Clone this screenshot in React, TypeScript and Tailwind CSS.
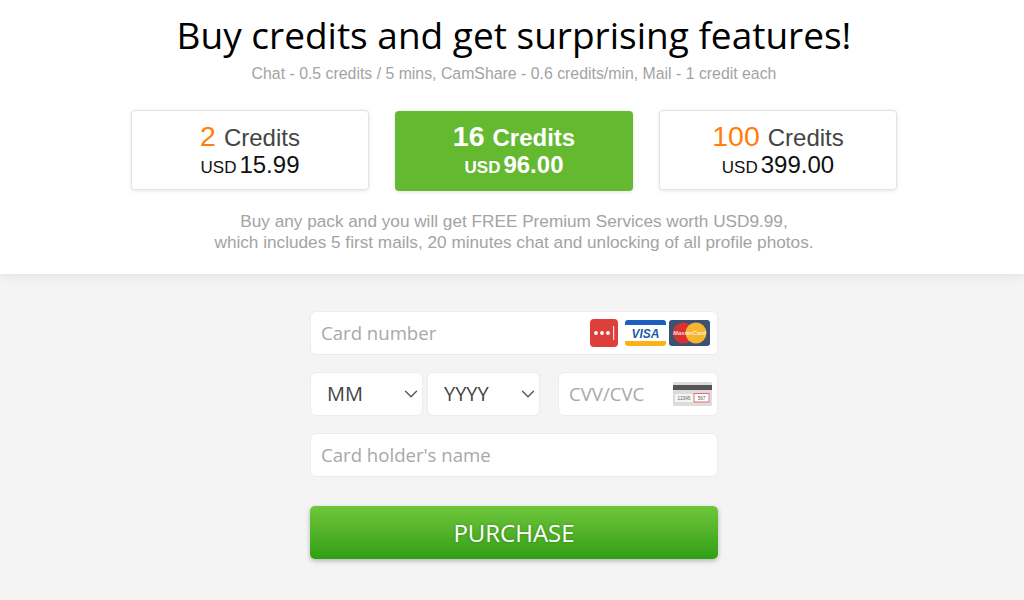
import React from 'react';
import { ChevronDown } from 'lucide-react';

const sans = 'font-["Liberation_Sans",Arial,sans-serif]';
const open = 'font-["Open_Sans",sans-serif]';

const packs = [
    { credits: '2', price: '15.99', active: false },
    { credits: '16', price: '96.00', active: true },
    { credits: '100', price: '399.00', active: false },
];

const LockIcon = () => (
    <svg width="28" height="28" viewBox="0 0 28 28">
        <rect width="28" height="28" rx="4" fill="#dd3f3a" />
        <circle cx="6" cy="14" r="1.9" fill="#fff" />
        <circle cx="12" cy="14" r="1.9" fill="#fff" />
        <circle cx="18" cy="14" r="1.9" fill="#fff" />
        <rect x="23" y="7" width="1.2" height="14" fill="#fff" opacity="0.85" />
    </svg>
);

const VisaIcon = () => (
    <svg width="41" height="26" viewBox="0 0 41 26">
        <path d="M0 5V3a3 3 0 0 1 3-3h35a3 3 0 0 1 3 3v2z" fill="#1a5fc0" />
        <rect y="5" width="41" height="16" fill="#fff" />
        <path d="M0 21h41v2a3 3 0 0 1-3 3H3a3 3 0 0 1-3-3z" fill="#fbb217" />
        <text x="20.5" y="17.5" textAnchor="middle" fontFamily="Liberation Sans, sans-serif" fontSize="12" fontWeight="700" fontStyle="italic" fill="#1c5ca8">VISA</text>
    </svg>
);

const MasterIcon = () => (
    <svg width="41" height="26" viewBox="0 0 41 26">
        <rect width="41" height="26" rx="3" fill="#3c5273" />
        <circle cx="14.5" cy="13" r="10.5" fill="#d9322e" />
        <circle cx="27" cy="13" r="10.5" fill="#f5b52e" />
        <text x="20.5" y="15" textAnchor="middle" fontFamily="Liberation Sans, sans-serif" fontSize="6" fontWeight="700" fontStyle="italic" fill="#fff" opacity="0.8">MasterCard</text>
    </svg>
);

const CvvIcon = () => (
    <svg width="39" height="24" viewBox="0 0 39 24">
        <rect width="39" height="24" rx="1.5" fill="#dcdcdc" />
        <rect y="3" width="39" height="5" fill="#555" />
        <rect x="2" y="12" width="35" height="8" fill="#f4f4f4" />
        <text x="11" y="18" textAnchor="middle" fontFamily="Liberation Sans, sans-serif" fontSize="4.6" fill="#666">12345</text>
        <rect x="21" y="11.5" width="15" height="8.5" fill="#fff" stroke="#ee6a6a" strokeWidth="1" />
        <text x="28.5" y="18" textAnchor="middle" fontFamily="Liberation Sans, sans-serif" fontSize="4.6" fill="#555">567</text>
    </svg>
);

const fieldBox = 'h-[44px] bg-white rounded-[6px] border border-[#ececec] flex items-center';

const SelectBox = ({ label }: { label: string }) => (
    <div className={`${fieldBox} w-[113px] pl-[16px] justify-between text-[20px] text-[#444]`}>
        <span>{label}</span>
        <ChevronDown size={22} strokeWidth={1.5} className="text-[#555]" />
    </div>
);

const App: React.FC = () => {
    return (
        <div className={`w-[1024px] h-[600px] overflow-hidden bg-[#f4f4f4] ${sans}`}>
            <section className="h-[274px] pl-[4px] bg-white flex flex-col items-center shadow-[0_1px_12px_rgba(0,0,0,0.09)]">
                <h1 className={`${open} mt-[10px] text-[37px] leading-[50px] text-black`}>
                    Buy credits and get surprising features!
                </h1>
                <p className="mt-[4px] text-[15.85px] leading-[20px] text-[#a3a3a3]">
                    Chat - 0.5 credits / 5 mins, CamShare - 0.6 credits/min, Mail - 1 credit each
                </p>
                <div className="mt-[26px] flex gap-[26px] items-start">
                    {packs.map(pack => (
                        <div
                            key={pack.credits}
                            className={pack.active
                                ? 'w-[238px] h-[80px] mt-[1px] rounded-[4px] bg-[#65b931] text-white font-bold flex flex-col items-center pt-[4px] shadow-[0_1px_4px_rgba(0,0,0,0.12)]'
                                : 'w-[238px] h-[80px] rounded-[4px] bg-white border border-[#e2e2e2] flex flex-col items-center pt-[4px] shadow-[0_1px_4px_rgba(0,0,0,0.1)]'}
                        >
                            <div className="h-[36px] flex items-baseline gap-[8px]">
                                <span className={pack.active ? 'text-[28.5px]' : 'text-[28.5px] text-[#ff7e0d]'}>{pack.credits}</span>
                                <span className={pack.active ? 'text-[24px]' : 'text-[24px] text-[#444]'}>Credits</span>
                            </div>
                            <div className={pack.active ? 'flex items-baseline gap-[3px]' : 'flex items-baseline gap-[3px] text-[#111]'}>
                                <span className="text-[17px]">USD</span>
                                <span className="text-[24px] leading-[28px]">{pack.price}</span>
                            </div>
                        </div>
                    ))}
                </div>
                <p className="mt-[20px] text-center text-[17.2px] leading-[21px] text-[#a3a3a3]">
                    Buy any pack and you will get FREE Premium Services worth USD9.99,<br />
                    which includes 5 first mails, 20 minutes chat and unlocking of all profile photos.
                </p>
            </section>

            <main className={`${open} w-[408px] ml-[310px] pt-[37px] flex flex-col`}>
                <div className={`${fieldBox} pl-[10px] pr-[7px] justify-between`}>
                    <span className="text-[18.6px] text-[#a8a8a8]">Card number</span>
                    <div className="flex items-center">
                        <span className="mr-[7px] flex"><LockIcon /></span>
                        <VisaIcon />
                        <span className="ml-[3px] flex"><MasterIcon /></span>
                    </div>
                </div>

                <div className="mt-[17px] flex">
                    <SelectBox label="MM" />
                    <div className="ml-[4px]"><SelectBox label="YYYY" /></div>
                    <div className={`${fieldBox} ml-[18px] w-[160px] pl-[10px] pr-[5px] justify-between`}>
                        <span className="text-[18.6px] text-[#a8a8a8]">CVV/CVC</span>
                        <CvvIcon />
                    </div>
                </div>

                <div className={`${fieldBox} mt-[17px] pl-[10px]`}>
                    <span className="text-[18.6px] text-[#a8a8a8]">Card holder's name</span>
                </div>

                <button className="mt-[29px] h-[53px] rounded-[5px] bg-gradient-to-b from-[#6fc63b] to-[#2f9f14] text-white text-[24px] shadow-[0_2px_5px_rgba(0,0,0,0.25)] [text-shadow:0_0_3px_rgba(0,0,0,0.25)]">
                    PURCHASE
                </button>
            </main>
        </div>
    );
};

export default App;
